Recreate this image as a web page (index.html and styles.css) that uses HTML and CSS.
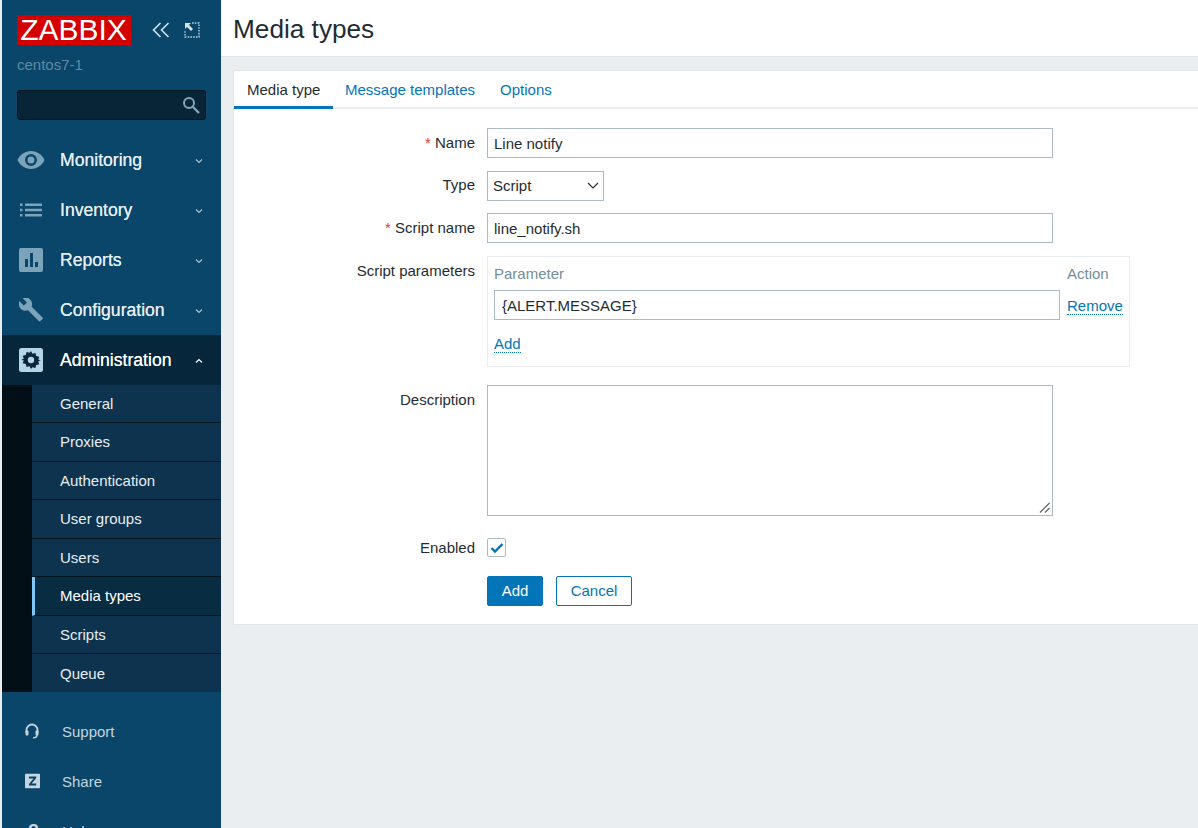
FILE: index.html
```html
<!DOCTYPE html>
<html lang="en">
<head>
    <meta charset="UTF-8">
    <title>Media types</title>
    <link rel="stylesheet" href="styles.css">
</head>
<body>
    <aside class="sidebar">
        <div class="brand">
            <div class="logo">ZABBIX</div>
            <button class="brand_btn collapse_btn" aria-label="Collapse">
                <svg width="20" height="18" viewBox="0 0 20 18"><path d="M9.5 2 2.5 9l7 7M17.5 2l-7 7 7 7" fill="none" stroke="#d5e3ea" stroke-width="1.6"/></svg>
            </button>
            <button class="brand_btn expand_btn" aria-label="Kiosk">
                <svg width="18" height="18" viewBox="0 0 18 18"><path d="M9 2h7v14H2V9" fill="none" stroke="#b9cdd8" stroke-width="1.4" stroke-dasharray="1.6 1.2"/><path d="M2 2h6L6 4l4 4-2 2-4-4-2 2z" fill="#d5e3ea"/></svg>
            </button>
        </div>
        <div class="server_name">centos7-1</div>
        <div class="search">
            <input type="text" class="search_input">
            <svg class="search_icon" width="18" height="18" viewBox="0 0 18 18"><circle cx="7" cy="7" r="5" fill="none" stroke="#83a5b8" stroke-width="2"/><path d="m11 11 6 6" stroke="#83a5b8" stroke-width="2.4"/></svg>
        </div>

        <nav class="menu">
            <a class="menu_item">
                <svg class="menu_icon menu_icon_eye" width="28" height="20" viewBox="0 0 28 20"><path d="M14 1C8 1 3 4.700 .5 10 3 15.300 8 19 14 19s11-3.700 13.500-9C25 4.700 20 1 14 1zm0 15a6 6 0 1 1 0-12 6 6 0 0 1 0 12zm0-9.500a3.500 3.500 0 1 0 0 7 3.500 3.500 0 0 0 0-7z" fill="#7ba3ba"/></svg>
                <span class="menu_label">Monitoring</span>
                <svg class="chevron" width="10" height="6" viewBox="0 0 10 6"><path d="m2 1.500 3 3 3-3" fill="none" stroke="#a9c2d0" stroke-width="1.200"/></svg>
            </a>
            <a class="menu_item">
                <svg class="menu_icon" width="24" height="14" viewBox="0 0 24 14"><path d="M1 .5h2.500v2.500H1zM1 5.700h2.500v2.500H1zM1 11h2.500v2.500H1zM6 .5h17v2.500H6zM6 5.700h17v2.500H6zM6 11h17v2.500H6z" fill="#7ba3ba"/></svg>
                <span class="menu_label">Inventory</span>
                <svg class="chevron" width="10" height="6" viewBox="0 0 10 6"><path d="m2 1.500 3 3 3-3" fill="none" stroke="#a9c2d0" stroke-width="1.200"/></svg>
            </a>
            <a class="menu_item">
                <svg class="menu_icon" width="24" height="24" viewBox="0 0 24 24"><path d="M2 0h20a2 2 0 0 1 2 2v20a2 2 0 0 1-2 2H2a2 2 0 0 1-2-2V2a2 2 0 0 1 2-2zm4 11v8h3v-8zm5-6v14h3V5zm5 9v5h3v-5z" fill="#7ba3ba" fill-rule="evenodd"/></svg>
                <span class="menu_label">Reports</span>
                <svg class="chevron" width="10" height="6" viewBox="0 0 10 6"><path d="m2 1.500 3 3 3-3" fill="none" stroke="#a9c2d0" stroke-width="1.200"/></svg>
            </a>
            <a class="menu_item">
                <svg class="menu_icon" width="24" height="24" viewBox="0 0 24 24"><path d="M23.500 19.500 12.700 8.700c.9-2.500.4-5.300-1.600-7.300C9-.6 6-1 3.500.1L7.800 4.400 4.800 7.400.4 3.100C-.8 5.600-.3 8.600 1.700 10.700c2 2 4.800 2.500 7.300 1.600l10.800 10.800c.5.500 1.200.5 1.700 0l2-2c.5-.4.500-1.200 0-1.600z" fill="#7ba3ba"/></svg>
                <span class="menu_label">Configuration</span>
                <svg class="chevron" width="10" height="6" viewBox="0 0 10 6"><path d="m2 1.500 3 3 3-3" fill="none" stroke="#a9c2d0" stroke-width="1.200"/></svg>
            </a>
            <a class="menu_item menu_item_open">
                <svg class="menu_icon" width="24" height="24" viewBox="0 0 24 24"><rect width="24" height="24" rx="2.500" fill="#b5d4e6"/><path d="M12 3l1.400 2.800 3-.9.800 3 3 .8-.9 3L22 12l-2.700 1.300.9 3-3 .8-.8 3-3-.9L12 21l-1.400-2.800-3 .9-.8-3-3-.8.900-3L2 12l2.700-1.300-.9-3 3-.8.800-3 3 .9z" fill="#06273b"/><circle cx="12" cy="12" r="3.200" fill="#b5d4e6"/></svg>
                <span class="menu_label">Administration</span>
                <svg class="chevron" width="10" height="6" viewBox="0 0 10 6"><path d="m2 4.500 3-3 3 3" fill="none" stroke="#ffffff" stroke-width="1.200"/></svg>
            </a>
            <div class="submenu">
                <a class="sub_item">General</a>
                <a class="sub_item">Proxies</a>
                <a class="sub_item">Authentication</a>
                <a class="sub_item">User groups</a>
                <a class="sub_item">Users</a>
                <a class="sub_item sub_item_active">Media types</a>
                <a class="sub_item">Scripts</a>
                <a class="sub_item">Queue</a>
            </div>
        </nav>

        <div class="user_menu">
            <a class="user_item">
                <svg class="user_icon" width="14" height="16" viewBox="0 0 14 16"><path d="M1.500 10V7a5.500 5.500 0 0 1 11 0v3" fill="none" stroke="#c3d5df" stroke-width="1.800"/><rect x=".5" y="7.500" width="3" height="5" rx="1" fill="#c3d5df"/><rect x="10.500" y="7.500" width="3" height="5" rx="1" fill="#c3d5df"/><path d="M12 12c0 2-1.500 2.800-4 2.800" fill="none" stroke="#c3d5df" stroke-width="1.400"/></svg>
                <span>Support</span>
            </a>
            <a class="user_item">
                <svg class="user_icon" width="15" height="15" viewBox="0 0 15 15"><path d="M1 0h13a1 1 0 0 1 1 1v13a1 1 0 0 1-1 1H1a1 1 0 0 1-1-1V1a1 1 0 0 1 1-1zm3 3v2h4.500L4 10.500V12h7.200v-2H6.700L11.200 4.500V3z" fill="#c3d5df" fill-rule="evenodd"/></svg>
                <span>Share</span>
            </a>
            <a class="user_item">
                <span class="help_mark">?</span>
                <span>Help</span>
            </a>
        </div>
    </aside>

    <main class="content">
        <header class="page_header">
            <h1>Media types</h1>
        </header>

        <section class="card">
            <div class="tabs">
                <a class="tab tab_active">Media type</a>
                <a class="tab tab_second">Message templates</a>
                <a class="tab">Options</a>
            </div>

            <form class="form">
                <div class="row row_name">
                    <label class="row_label"><span class="asterisk">*</span> Name</label>
                    <input type="text" class="text_input" value="Line notify">
                </div>
                <div class="row row_type">
                    <label class="row_label">Type</label>
                    <div class="select_wrap">
                        <select class="select_input"><option>Script</option></select>
                        <svg class="select_arrow" width="12" height="7" viewBox="0 0 12 7"><path d="m1 1 5 5 5-5" fill="none" stroke="#1f2c33" stroke-width="1.100"/></svg>
                    </div>
                </div>
                <div class="row row_script">
                    <label class="row_label"><span class="asterisk">*</span> Script name</label>
                    <input type="text" class="text_input" value="line_notify.sh">
                </div>
                <div class="row row_params">
                    <label class="row_label">Script parameters</label>
                    <div class="params">
                        <div class="params_head">
                            <span>Parameter</span>
                            <span class="params_action">Action</span>
                        </div>
                        <div class="params_line">
                            <input type="text" class="param_input" value="{ALERT.MESSAGE}">
                            <a class="dotted_link params_remove">Remove</a>
                        </div>
                        <a class="dotted_link params_add">Add</a>
                    </div>
                </div>
                <div class="row row_desc">
                    <label class="row_label">Description</label>
                    <div class="area_wrap">
                        <textarea class="text_area"></textarea>
                        <svg class="area_grip" width="12" height="12" viewBox="0 0 12 12"><path d="M1 10.500 10.500 1M6 10.500l4.500-4.500" fill="none" stroke="#666666" stroke-width="1.300"/></svg>
                    </div>
                </div>
                <div class="row row_enabled">
                    <label class="row_label">Enabled</label>
                    <span class="checkbox">
                        <svg width="14" height="12" viewBox="0 0 14 12"><path d="M1.500 6 5 9.500 12.500 2" fill="none" stroke="#0275b8" stroke-width="2.400"/></svg>
                    </span>
                </div>
                <div class="row row_buttons">
                    <span class="row_label"></span>
                    <button type="button" class="btn btn_primary">Add</button>
                    <button type="button" class="btn btn_alt">Cancel</button>
                </div>
            </form>
        </section>
    </main>
</body>
</html>
```

FILE: styles.css
```css
* {
    margin: 0;
    padding: 0;
    box-sizing: border-box;
}

body {
    display: flex;
    height: 100vh;
    overflow: hidden;
    padding-left: 2px;
    background-color: #ebeef0;
    color: #1f2c33;
    font-family: "Liberation Sans", Arial, sans-serif;
    font-size: 15px;
}

/* sidebar */
.sidebar {
    flex: 0 0 219px;
    height: 828px;
    overflow: hidden;
    background-color: #0a466a;
    display: flex;
    flex-direction: column;
}

.brand {
    display: flex;
    align-items: center;
    height: 30px;
    margin-top: 15px;
    padding-left: 15px;
}

.logo {
    width: 114px;
    height: 30px;
    padding-right: 1px;
    background-color: #d40000;
    color: #ffffff;
    font-size: 30px;
    line-height: 30px;
    text-align: center;
}

.brand_btn {
    display: flex;
    background: none;
    border: none;
}

.collapse_btn {
    margin-left: 20px;
}

.expand_btn {
    margin-left: 12px;
}

.server_name {
    margin-top: 11px;
    padding-left: 15px;
    color: #5f8aa3;
    line-height: 18px;
}

.search {
    position: relative;
    margin: 16px 15px 0;
}

.search_input {
    display: block;
    width: 189px;
    height: 30px;
    background-color: #072536;
    border: 1px solid #04161f;
    border-radius: 3px;
}

.search_icon {
    position: absolute;
    top: 6px;
    right: 6px;
}

.menu {
    margin-top: 15px;
}

.menu_item {
    display: flex;
    align-items: center;
    height: 50px;
    position: relative;
    color: #e6eef3;
    font-size: 17.6px;
    text-shadow: 0 0 0.5px #e6eef3;
}

.menu_icon {
    position: absolute;
    left: 17px;
    top: 50%;
    transform: translateY(-50%);
}

.menu_icon_eye {
    left: 15px;
}

.menu_label {
    margin-left: 58px;
}

.chevron {
    position: absolute;
    right: 17px;
    top: 23px;
}

.menu_item_open {
    background-color: #06273b;
    color: #ffffff;
}

.submenu {
    border-left: 30px solid #020f16;
    background-color: #0e334e;
}

.sub_item {
    display: flex;
    align-items: center;
    height: 38.5px;
    padding-left: 28px;
    border-bottom: 1px solid #04161f;
    color: #e6eef3;
}

.sub_item:first-child {
    height: 38px;
}

.sub_item:last-child {
    height: 38px;
    border-bottom: none;
}

.sub_item_active {
    background-color: #082c41;
    border-left: 3px solid #7ec6f5;
    padding-left: 25px;
    color: #ffffff;
}

.user_menu {
    margin-top: 14px;
}

.user_item {
    display: flex;
    align-items: center;
    height: 50px;
    flex-shrink: 0;
    position: relative;
    padding-left: 60px;
    color: #c3d5df;
}

.user_icon {
    position: absolute;
    left: 23px;
    top: 50%;
    transform: translateY(-50%);
}

.help_mark {
    position: absolute;
    left: 26px;
    color: #c3d5df;
    font-size: 18px;
    font-weight: bold;
}

/* main */
.content {
    flex: 1;
    min-width: 0;
}

.page_header {
    height: 57px;
    padding: 14px 0 0 12px;
    background-color: #ffffff;
    border-bottom: 1px solid #dfe4e7;
}

.page_header h1 {
    font-size: 26.2px;
    font-weight: normal;
    line-height: 30px;
}

.card {
    height: 555px;
    margin: 13px 0 0 12px;
    background-color: #ffffff;
    border: 1px solid #dfe4e7;
    border-right: none;
}

.tabs {
    display: flex;
    height: 38px;
    border-bottom: 2px solid #ebeef0;
}

.tab {
    height: 38px;
    padding: 10px 12px 0 13px;
    color: #0275b8;
    white-space: nowrap;
}

.tab_active {
    width: 99px;
    border-bottom: 3px solid #0275b8;
    color: #1f2c33;
}

.tab_second {
    padding-left: 12px;
}

.form {
    padding-top: 19px;
}

.row {
    display: flex;
    align-items: flex-start;
}

.row_label {
    flex: 0 0 241px;
    padding-top: 6px;
    margin-right: 12px;
    text-align: right;
}

.asterisk {
    color: #e33734;
}

.row_name, .row_script {
    margin-bottom: 13px;
}

.row_type {
    margin-bottom: 12px;
}

.row_type .row_label {
    padding-top: 5px;
}

.row_params {
    margin-bottom: 18px;
}

.row_desc {
    margin-bottom: 21px;
}

.row_enabled {
    margin-bottom: 19px;
}

.text_input, .param_input, .text_area, .select_input {
    border: 1px solid #acbbc2;
    background-color: #ffffff;
    color: #1f2c33;
    font-family: inherit;
    font-size: 15px;
}

.text_input {
    width: 566px;
    height: 30px;
    padding: 1px 6px 0;
}

.select_wrap {
    position: relative;
    display: flex;
}

.select_input {
    appearance: none;
    width: 117px;
    height: 30px;
    padding: 0 0 2px 5px;
    border-radius: 0;
}

.select_arrow {
    position: absolute;
    top: 11px;
    right: 5px;
}

.area_wrap {
    position: relative;
}

.text_area {
    display: block;
    width: 566px;
    height: 131px;
    padding: 6px;
    resize: none;
}

.area_grip {
    position: absolute;
    right: 2px;
    bottom: 2px;
}

.params {
    width: 643px;
    height: 111px;
    padding: 6px;
    border: 1px solid #ebeef0;
}

.params_head {
    display: flex;
    justify-content: space-between;
    height: 27px;
    padding-top: 2px;
    color: #768d99;
}

.params_action {
    width: 56px;
}

.params_line {
    display: flex;
    align-items: center;
    gap: 7px;
}

.param_input {
    width: 566px;
    height: 30px;
    padding: 0 7px;
}

.dotted_link {
    color: #0275b8;
    border-bottom: 1px dotted #0275b8;
    line-height: 17px;
}

.params_remove {
    margin-top: 2px;
}

.params_add {
    display: inline-block;
    margin-top: 15px;
}

.row_enabled .row_label {
    padding-top: 2px;
}

.checkbox {
    display: flex;
    align-items: center;
    justify-content: center;
    width: 19px;
    height: 19px;
    margin-top: 1px;
    border: 1px solid #acbbc2;
    border-radius: 2px;
}

.btn {
    height: 30px;
    padding-bottom: 2px;
    border-radius: 2px;
    font-family: inherit;
    font-size: 15px;
    cursor: pointer;
}

.btn_primary {
    width: 56px;
    background-color: #0275b8;
    border: 1px solid #0275b8;
    color: #ffffff;
}

.btn_alt {
    width: 76px;
    margin-left: 13px;
    background-color: #ffffff;
    border: 1px solid #0275b8;
    color: #0275b8;
}
```
